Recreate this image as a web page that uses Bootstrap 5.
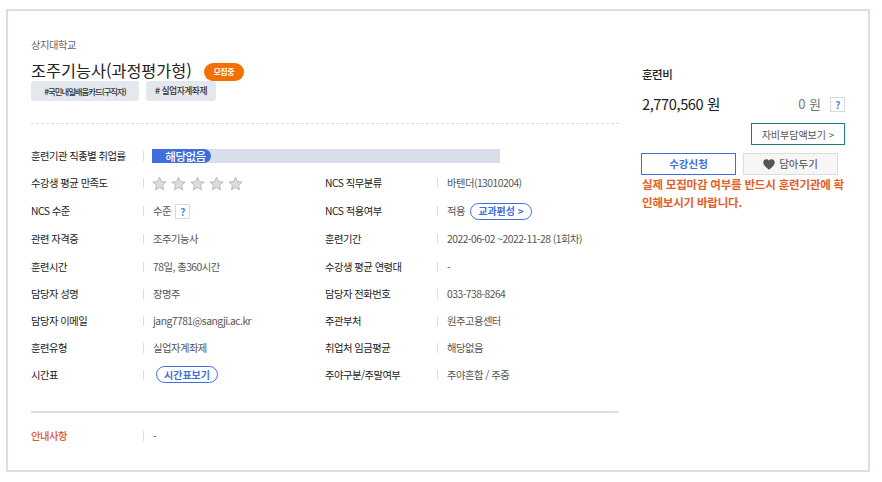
<!doctype html>
<html lang="ko"><head><meta charset="utf-8"><title>과정</title>
<link rel="stylesheet" href="https://cdn.jsdelivr.net/npm/bootstrap@5.3.0/dist/css/bootstrap.min.css">
<style>
html,body{width:882px;height:482px;overflow:hidden;background:#fff}
body{font-family:"Noto Sans CJK KR","Noto Sans",sans-serif;font-size:10.3px;letter-spacing:-.5px;color:#333}
.frame{margin:9px 0 0 6px;width:864px;height:463px;border:2px solid #d9deeb;padding:27px 24px 0 23px}
.leftp{width:588px}
.rightp{width:204px;margin-left:22px;padding-top:29px}
.org{font-size:10.3px;color:#666;line-height:14px;margin-bottom:6px}
.ttl{font-size:16.3px;line-height:24px;color:#222;letter-spacing:0;font-weight:400}
.state{background:#f07000;color:#fff;font-size:8px;font-weight:700;border-radius:9px;width:40px;height:18px;margin-left:12px;margin-top:5px}
.tagx{background:#e3e7ee;color:#333;font-size:8.8px;border-radius:3px;height:20px;font-weight:500;margin-top:-1px}
.t1{width:108px;font-size:8.4px;letter-spacing:-1px}.t2{width:70px;margin-left:7px}
.dash{border-top:1px dashed #d9dde4;margin-top:22px;margin-bottom:18px}
.frow{height:27px}
.rowh28{height:28px}
.cellx{width:294px}
.lbl{width:112px;color:#222;font-size:10.3px;font-weight:400;line-height:14px}
.sepx{width:1px;height:10px;background:#ddd;margin-right:9px}
.val{color:#555;font-size:10.3px}
.barbg{width:348px;height:14px;background:#d9deeb;margin-left:-1px}
.barfg{width:59px;height:14px;background:#3f6fdc;color:#fff;font-size:11.5px;font-weight:500;border-radius:0 7px 7px 0;line-height:14px;padding-left:8px}
.pillb{border:1px solid #3f6fdc;color:#3f6fdc;border-radius:9px;font-weight:700;font-size:10px;height:17px;line-height:14px;background:#fff;padding:0}
.p1{width:62px;margin-left:3px}.p2{width:62px;margin-left:5px}
.qbox{display:inline-flex;align-items:center;justify-content:center;border:1px solid #d9d9d9;color:#5b84e0;font-weight:700;font-size:10px;width:15px;height:15px}
.stars{gap:4px;margin-left:-1px}
.hrx{border-top:2px solid #d9deeb;margin-top:23px;margin-bottom:9px}
.warnl{color:#e2572b;font-weight:500}
.fee{font-size:11.5px;color:#222;line-height:14px;font-weight:500;padding-left:1px}
.amt{font-size:14.6px;color:#222;line-height:20px;margin-top:13px;letter-spacing:-.4px;padding-left:1px}
.zero{font-size:13px;color:#777;margin-right:9px;letter-spacing:0}
.priced{margin-top:-20px;height:20px}
.selfb{border:1px solid #1f7c7c;color:#555;font-size:10px;width:94px;height:22px;background:#fff;padding:0;border-radius:0;margin-top:9px}
.btnrow{margin-top:8px;gap:7px}
.apply{border:1px solid #3f6fdc;color:#3f6fdc;font-weight:700;background:#fff;width:95px;height:22px;font-size:10.5px;padding:0;border-radius:0}
.keep{border:1px solid #ddd;background:#f6f6f6;color:#666;width:95px;height:22px;font-size:10.5px;padding:0;border-radius:0;font-weight:500}
.note{color:#e2602a;font-size:11.5px;font-weight:700;line-height:18px;margin-top:0;padding-left:1px;width:208px;letter-spacing:-.2px}
</style></head><body>
<div class="frame d-flex">
<div class="leftp">
 <div class="org">상지대학교</div>
 <div class="d-flex"><h1 class="ttl m-0">조주기능사(과정평가형)</h1><span class="state d-flex align-items-center justify-content-center">모집중</span></div>
 <div class="d-flex"><span class="tagx t1 d-flex align-items-center justify-content-center">#국민내일배움카드(구직자)</span><span class="tagx t2 d-flex align-items-center justify-content-center"># 실업자계좌제</span></div>
 <div class="dash"></div>
 <div class="frow d-flex align-items-center"><span class="lbl">훈련기관 직종별 취업률</span><span class="sepx"></span><div class="barbg"><div class="barfg text-center">해당없음</div></div></div>
 <div class="frow rowh28 d-flex align-items-center">
  <div class="cellx d-flex align-items-center"><span class="lbl">수강생 평균 만족도</span><span class="sepx"></span>
   <span class="stars d-flex"><svg width="15" height="15" viewBox="0 0 24 24"><path fill="#dcdcdc" stroke="#b5b5b5" stroke-width="1.5" d="M12 2l3 7 7.500 .7-5.700 5 1.700 7.300L12 18.200 5.500 22l1.700-7.300-5.700-5L9 9z"/></svg><svg width="15" height="15" viewBox="0 0 24 24"><path fill="#dcdcdc" stroke="#b5b5b5" stroke-width="1.5" d="M12 2l3 7 7.500 .7-5.700 5 1.700 7.300L12 18.200 5.500 22l1.700-7.300-5.700-5L9 9z"/></svg><svg width="15" height="15" viewBox="0 0 24 24"><path fill="#dcdcdc" stroke="#b5b5b5" stroke-width="1.5" d="M12 2l3 7 7.500 .7-5.700 5 1.700 7.300L12 18.200 5.500 22l1.700-7.300-5.700-5L9 9z"/></svg><svg width="15" height="15" viewBox="0 0 24 24"><path fill="#dcdcdc" stroke="#b5b5b5" stroke-width="1.5" d="M12 2l3 7 7.500 .7-5.700 5 1.700 7.300L12 18.200 5.500 22l1.700-7.300-5.700-5L9 9z"/></svg><svg width="15" height="15" viewBox="0 0 24 24"><path fill="#dcdcdc" stroke="#b5b5b5" stroke-width="1.5" d="M12 2l3 7 7.500 .7-5.700 5 1.700 7.300L12 18.200 5.500 22l1.700-7.300-5.700-5L9 9z"/></svg></span></div>
  <div class="cellx d-flex align-items-center"><span class="lbl">NCS 직무분류</span><span class="sepx"></span><span class="val">바텐더(13010204)</span></div>
 </div>
 <div class="frow rowh28 d-flex align-items-center">
  <div class="cellx d-flex align-items-center"><span class="lbl">NCS 수준</span><span class="sepx"></span><span class="val">수준</span><span class="qbox ms-1">?</span></div>
  <div class="cellx d-flex align-items-center"><span class="lbl">NCS 적용여부</span><span class="sepx"></span><span class="val">적용</span><button class="btn pillb p2">교과편성 &gt;</button></div>
 </div>
 <div class="frow rowh28 d-flex align-items-center">
  <div class="cellx d-flex align-items-center"><span class="lbl">관련 자격증</span><span class="sepx"></span><span class="val">조주기능사</span></div>
  <div class="cellx d-flex align-items-center"><span class="lbl">훈련기간</span><span class="sepx"></span><span class="val">2022-06-02 ~2022-11-28 (1회차)</span></div>
 </div>
 <div class="frow d-flex align-items-center">
  <div class="cellx d-flex align-items-center"><span class="lbl">훈련시간</span><span class="sepx"></span><span class="val">78일, 총360시간</span></div>
  <div class="cellx d-flex align-items-center"><span class="lbl">수강생 평균 연령대</span><span class="sepx"></span><span class="val">-</span></div>
 </div>
 <div class="frow d-flex align-items-center">
  <div class="cellx d-flex align-items-center"><span class="lbl">담당자 성명</span><span class="sepx"></span><span class="val">장명주</span></div>
  <div class="cellx d-flex align-items-center"><span class="lbl">담당자 전화번호</span><span class="sepx"></span><span class="val">033-738-8264</span></div>
 </div>
 <div class="frow d-flex align-items-center">
  <div class="cellx d-flex align-items-center"><span class="lbl">담당자 이메일</span><span class="sepx"></span><span class="val">jang7781@sangji.ac.kr</span></div>
  <div class="cellx d-flex align-items-center"><span class="lbl">주관부처</span><span class="sepx"></span><span class="val">원주고용센터</span></div>
 </div>
 <div class="frow d-flex align-items-center">
  <div class="cellx d-flex align-items-center"><span class="lbl">훈련유형</span><span class="sepx"></span><span class="val">실업자계좌제</span></div>
  <div class="cellx d-flex align-items-center"><span class="lbl">취업처 임금평균</span><span class="sepx"></span><span class="val">해당없음</span></div>
 </div>
 <div class="frow d-flex align-items-center">
  <div class="cellx d-flex align-items-center"><span class="lbl">시간표</span><span class="sepx"></span><button class="btn pillb p1">시간표보기</button></div>
  <div class="cellx d-flex align-items-center"><span class="lbl">주야구분/주말여부</span><span class="sepx"></span><span class="val">주야혼합 / 주중</span></div>
 </div>
 <div class="hrx"></div>
 <div class="frow d-flex align-items-center"><span class="lbl warnl">안내사항</span><span class="sepx"></span><span class="val">-</span></div>
</div>
<div class="rightp">
 <div class="fee">훈련비</div>
 <div class="amt">2,770,560 원</div>
 <div class="priced d-flex justify-content-end align-items-center"><span class="zero">0 원</span><span class="qbox">?</span></div>
 <div class="d-flex justify-content-end"><button class="btn selfb">자비부담액보기 &gt;</button></div>
 <div class="btnrow d-flex"><button class="btn apply">수강신청</button><button class="btn keep d-flex align-items-center justify-content-center gap-1"><svg width="12" height="11" viewBox="0 0 24 22"><path fill="#555" d="M12 21.500C5 15.500 .5 11.500 .5 6.800.5 3 3.400.5 6.800.5c2.100 0 4 1 5.200 2.800C13.200 1.500 15.100.5 17.200.5c3.400 0 6.300 2.500 6.300 6.300 0 4.700-4.500 8.700-11.500 14.700z"/></svg>담아두기</button></div>
 <div class="note">실제 모집마감 여부를 반드시 훈련기관에 확인해보시기 바랍니다.</div>
</div>
</div>
</body></html>
